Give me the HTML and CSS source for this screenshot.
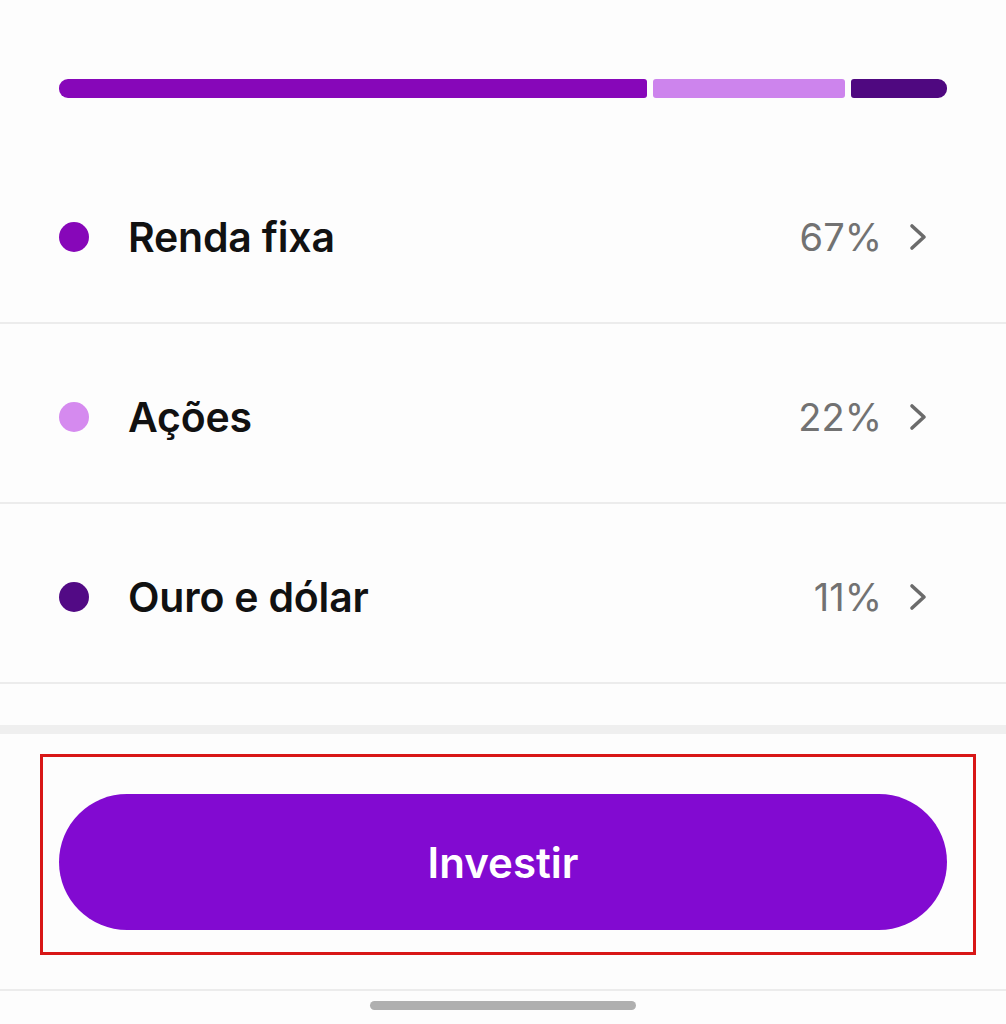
FILE: index.html
```html
<!DOCTYPE html>
<html lang="pt-BR">
<head>
<meta charset="utf-8">
<link rel="stylesheet" href="styles.css">
</head>
<body>
<div class="page">
  <div class="bar">
    <div class="seg seg-fixa" style="width:588px"></div>
    <div class="seg seg-acoes" style="width:192px"></div>
    <div class="seg seg-ouro" style="width:96px"></div>
  </div>
  <ul class="list">
    <li class="row">
      <span class="dot dot-fixa"></span>
      <span class="label">Renda fixa</span>
      <span class="pct">67%</span>
      <svg class="chev" width="20" height="28" viewBox="0 0 20 28"><polyline points="4,3 16,14 4,25" fill="none" stroke="#6b6b6b" stroke-width="3.6" stroke-linecap="round" stroke-linejoin="round"/></svg>
    </li>
    <li class="row">
      <span class="dot dot-acoes"></span>
      <span class="label">Ações</span>
      <span class="pct">22%</span>
      <svg class="chev" width="20" height="28" viewBox="0 0 20 28"><polyline points="4,3 16,14 4,25" fill="none" stroke="#6b6b6b" stroke-width="3.6" stroke-linecap="round" stroke-linejoin="round"/></svg>
    </li>
    <li class="row">
      <span class="dot dot-ouro"></span>
      <span class="label">Ouro e dólar</span>
      <span class="pct">11%</span>
      <svg class="chev" width="20" height="28" viewBox="0 0 20 28"><polyline points="4,3 16,14 4,25" fill="none" stroke="#6b6b6b" stroke-width="3.6" stroke-linecap="round" stroke-linejoin="round"/></svg>
    </li>
  </ul>
  <div class="band"></div>
  <div class="footer">
    <div class="highlight">
      <button class="invest">Investir</button>
    </div>
  </div>
  <div class="home">
    <span class="home-bar"></span>
  </div>
</div>
</body>
</html>
```

FILE: styles.css
```css
* { box-sizing: border-box; }
html, body { margin: 0; padding: 0; background: #fdfdfd; }
body { font-family: "Inter", "Liberation Sans", sans-serif; width: 1006px; height: 1024px; overflow: hidden; }
.page { display: flex; flex-direction: column; }

.bar { display: flex; gap: 6px; margin: 79px 59px 0 59px; height: 19px; }
.seg { height: 19px; border-radius: 3px; }
.seg-fixa { background: #8707b9; border-radius: 9px 3px 3px 9px; }
.seg-acoes { background: #cd84ed; }
.seg-ouro { background: #4f0880; border-radius: 3px 9px 9px 3px; }

.list { list-style: none; margin: 46px 0 0 0; padding: 0; }
.row { display: flex; align-items: center; height: 180px; padding: 8px 78px 0 59px; border-bottom: 2px solid #ececec; }
.dot { width: 30px; height: 30px; border-radius: 50%; flex: none; margin-right: 39px; }
.dot-fixa { background: #8707b9; }
.dot-acoes { background: #d58aef; }
.dot-ouro { background: #520a85; }
.label { flex: 1; font-size: 41px; font-weight: 600; color: #111; letter-spacing: -0.2px; }
.pct { font-size: 38px; font-weight: 400; color: #727272; margin-right: 26px; }
.chev { flex: none; }

.band { height: 9px; background: #efefef; margin-top: 41px; }

.footer { padding: 20px 0 0 40px; height: 257px; border-bottom: 2px solid #ececec; }
.highlight { width: 936px; height: 201px; border: 3px solid #d81717; padding: 37px 26px 0 16px; }
.invest { display: block; width: 888px; height: 136px; border: none; border-radius: 68px; background: #820ad1; color: #fff; font-family: "Inter", "Liberation Sans", sans-serif; font-size: 42px; font-weight: 600; }

.home { display: flex; justify-content: center; padding-top: 10px; }
.home-bar { width: 266px; height: 9px; border-radius: 5px; background: #afafaf; }
```
